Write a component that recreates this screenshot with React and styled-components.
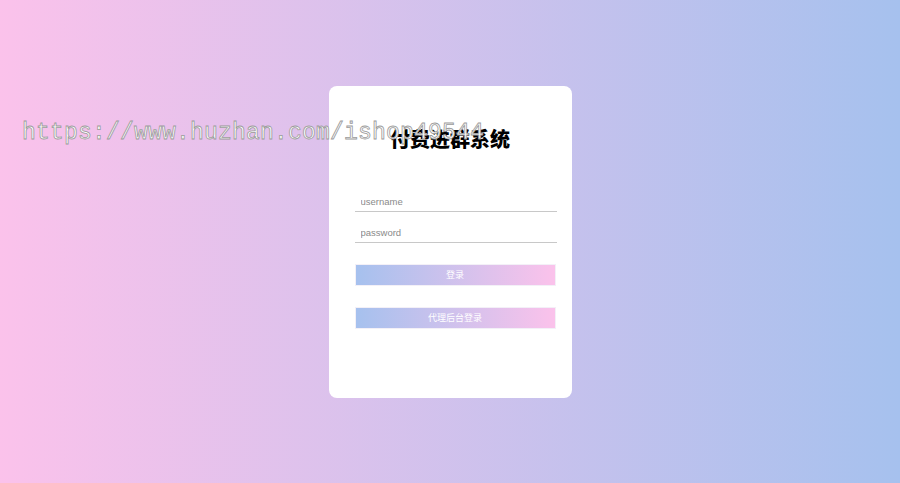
import styled, { createGlobalStyle } from 'styled-components';

const GlobalStyle = createGlobalStyle`
  html, body {
    margin: 0;
    padding: 0;
    height: 100%;
  }
  body {
    font-family: "Liberation Sans", "Noto Sans CJK SC", Arial, sans-serif;
  }
  #root {
    height: 100%;
  }
`;

const Page = styled.div`
  position: relative;
  height: 100vh;
  display: flex;
  align-items: center;
  justify-content: center;
  background: linear-gradient(to right, #fbc2eb, #a6c1ee);
  overflow: hidden;
`;

const Card = styled.div`
  width: 243px;
  height: 312px;
  box-sizing: border-box;
  background: #fff;
  border-radius: 8px;
  padding: 38px 15px 0 26px;
  display: flex;
  flex-direction: column;
`;

const Title = styled.h1`
  margin: 0 0 0 -11px;
  font-family: "Noto Sans CJK SC", sans-serif;
  font-size: 20px;
  font-weight: 900;
  line-height: 30px;
  text-align: center;
  color: #000;
`;

const Form = styled.div`
  margin-top: 36px;
  display: flex;
  flex-direction: column;
`;

const Input = styled.input`
  height: 22px;
  box-sizing: border-box;
  width: 202px;
  border: 0;
  border-bottom: 1.5px solid #c8c8c8;
  outline: none;
  padding: 3px 6px 0;
  margin-bottom: ${p => p.$gap}px;
  font-family: "Liberation Sans", Arial, sans-serif;
  font-size: 9.5px;
  color: #333;
  background: transparent;
  &::placeholder {
    color: #8a8a8a;
  }
`;

const Button = styled.button`
  width: 201px;
  height: 22px;
  margin-top: ${p => p.$top}px;
  border: 1px solid #f3f0f7;
  padding: 0;
  background: linear-gradient(to right, #a6c1ee, #fbc2eb);
  color: #fff;
  font-family: "Noto Sans CJK SC", sans-serif;
  font-size: 9px;
  cursor: pointer;
`;

const Watermark = styled.div`
  position: absolute;
  left: 22px;
  top: 120px;
  font-family: "Liberation Mono", "Courier New", monospace;
  font-size: 23px;
  letter-spacing: 0.2px;
  color: #fff;
  -webkit-text-stroke: 0.8px #9a9a9a;
  pointer-events: none;
  white-space: nowrap;
`;

export default function App() {
  return (
    <>
      <GlobalStyle />
      <Page>
        <Card>
          <Title>付费进群系统</Title>
          <Form>
            <Input type="text" placeholder="username" $gap={9} />
            <Input type="password" placeholder="password" $gap={0} />
            <Button $top={21}>登录</Button>
            <Button $top={21}>代理后台登录</Button>
          </Form>
        </Card>
        <Watermark>https://www.huzhan.com/ishop49544</Watermark>
      </Page>
    </>
  );
}
